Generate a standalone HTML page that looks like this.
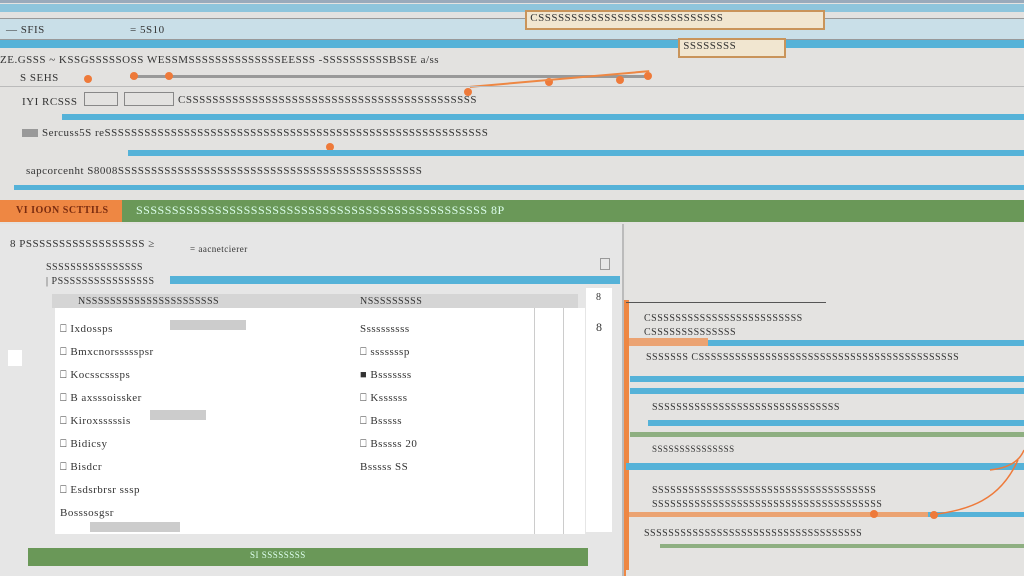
<!DOCTYPE html><html><head><style>
body{margin:0;width:1024px;height:576px;background:#e3e2e0;position:relative;overflow:hidden;font-family:"Liberation Serif",serif;color:#333}
div{position:absolute;box-sizing:border-box}
.t{font-size:11px;white-space:nowrap;letter-spacing:0.5px}
.b{background:#55b2d8}
.g{background:#6a9858}
.o{background:#ee8743}
.dot{width:8px;height:8px;border-radius:50%;background:#ee7a3a}
</style></head><body>
<div style="left:0;top:0;width:1024px;height:3px;background:#9ab"></div>
<div class="b" style="left:0;top:4px;width:1024px;height:8px;opacity:.6"></div>
<div style="left:0;top:18px;width:1024px;height:22px;background:#c9dfe8;border-top:1px solid #999;border-bottom:1px solid #999"></div>
<div class="t" style="left:6px;top:24px">— SFIS</div>
<div class="t" style="left:130px;top:24px">=  5S10</div>
<div class="b" style="left:0;top:40px;width:1024px;height:8px"></div>
<div class="t" style="left:0;top:54px">ZE.GSSS ~ KSSGSSSSSOSS WESSMSSSSSSSSSSSSSSEESSS -SSSSSSSSSSBSSE a/ss</div>
<div class="t" style="left:20px;top:72px">S  SEHS</div>
<div class="dot" style="left:84px;top:75px"></div>
<div style="left:130px;top:75px;width:520px;height:3px;background:#999"></div>
<div class="dot" style="left:130px;top:72px"></div><div class="dot" style="left:165px;top:72px"></div>
<div class="dot" style="left:545px;top:78px"></div><div class="dot" style="left:616px;top:76px"></div><div class="dot" style="left:644px;top:72px"></div>
<div style="left:470px;top:78px;width:180px;height:12px;border-top:2px solid #ee8743;transform:rotate(-5deg)"></div>
<div style="left:525px;top:10px;width:300px;height:20px;background:#f1e6d0;border:2px solid #c9945a" class="t">&nbsp;CSSSSSSSSSSSSSSSSSSSSSSSSSSSS</div>
<div style="left:678px;top:38px;width:108px;height:20px;background:#f1e6d0;border:2px solid #c9945a" class="t">&nbsp;SSSSSSSS</div>
<div style="left:0;top:72px;width:1024px;height:1px;background:#bbb;top:86px"></div>
<div class="t" style="left:22px;top:96px">IYI  RCSSS</div>
<div style="left:84px;top:92px;width:34px;height:14px;border:1px solid #888"></div>
<div style="left:124px;top:92px;width:50px;height:14px;border:1px solid #888"></div>
<div class="t" style="left:178px;top:94px">CSSSSSSSSSSSSSSSSSSSSSSSSSSSSSSSSSSSSSSSSSSSS</div>
<div class="dot" style="left:464px;top:88px"></div>
<div class="b" style="left:62px;top:114px;width:962px;height:6px"></div>
<div style="left:22px;top:129px;width:16px;height:8px;background:#999"></div>
<div class="t" style="left:42px;top:127px">Sercuss5S  reSSSSSSSSSSSSSSSSSSSSSSSSSSSSSSSSSSSSSSSSSSSSSSSSSSSSSSSSSS</div>
<div class="dot" style="left:326px;top:143px"></div>
<div class="b" style="left:128px;top:150px;width:896px;height:6px"></div>
<div class="t" style="left:26px;top:165px">sapcorcenht  S8008SSSSSSSSSSSSSSSSSSSSSSSSSSSSSSSSSSSSSSSSSSSSSS</div>
<div class="b" style="left:14px;top:185px;width:1010px;height:5px"></div>
<div class="o" style="left:0;top:200px;width:122px;height:22px"></div>
<div class="t" style="left:16px;top:205px;color:#7a2c10;font-weight:bold;font-size:10px">VI IOON SCTTILS</div>
<div class="g" style="left:122px;top:200px;width:902px;height:22px"></div>
<div class="t" style="left:136px;top:203px;color:#dfe;font-size:12px">SSSSSSSSSSSSSSSSSSSSSSSSSSSSSSSSSSSSSSSSSSSSSSSSS 8P</div>
<div style="left:0;top:224px;width:624px;height:352px;background:#e6e6e6;border-right:2px solid #bbb"></div>
<div class="t" style="left:10px;top:238px">8  PSSSSSSSSSSSSSSSSSS  ≥</div>
<div class="t" style="left:190px;top:244px;font-size:9px">= aacnetcierer</div>
<div style="left:600px;top:258px;width:10px;height:12px;border:1px solid #999"></div>
<div class="t" style="left:46px;top:262px;font-size:10px">SSSSSSSSSSSSSSSS</div>
<div class="b" style="left:170px;top:276px;width:450px;height:8px"></div>
<div class="t" style="left:46px;top:276px;font-size:10px">| PSSSSSSSSSSSSSSSS</div>
<div style="left:52px;top:294px;width:526px;height:14px;background:#d5d5d5"></div>
<div class="t" style="left:78px;top:296px;font-size:10px">NSSSSSSSSSSSSSSSSSSSSSS</div>
<div class="t" style="left:360px;top:296px;font-size:10px">NSSSSSSSSS</div>
<div style="left:586px;top:288px;width:26px;height:244px;background:#fff"></div>
<div class="t" style="left:596px;top:292px;font-size:10px">8</div>
<div class="t" style="left:596px;top:320px;font-size:12px">8</div>
<div style="left:55px;top:308px;width:530px;height:226px;background:#fff"></div>
<div style="left:534px;top:308px;width:30px;height:226px;border-left:1px solid #ccc;border-right:1px solid #ccc"></div>
<div style="left:8px;top:350px;width:14px;height:16px;background:#fff"></div>
<div style="left:170px;top:320px;width:76px;height:10px;background:#ccc"></div>
<div style="left:150px;top:410px;width:56px;height:10px;background:#ccc"></div>
<div style="left:90px;top:522px;width:90px;height:10px;background:#ccc"></div>
<div class="t" style="left:60px;top:318px;line-height:23px">⎕ Ixdossps<br>⎕ Bmxcnorssssspsr<br>⎕ Kocsscsssps<br>⎕ B axsssoissker<br>⎕ Kiroxsssssis<br>⎕ Bidicsy<br>⎕ Bisdcr<br>⎕ Esdsrbrsr sssp<br>  Bosssosgsr</div>
<div class="t" style="left:360px;top:318px;line-height:23px">Ssssssssss<br>⎕ sssssssp<br>■ Bsssssss<br>⎕ Kssssss<br>⎕ Bsssss<br>⎕ Bsssss 20<br>  Bsssss SS</div>
<div class="g" style="left:28px;top:548px;width:560px;height:18px"></div>
<div class="t" style="left:250px;top:550px;font-size:9px;color:#dfe">SI SSSSSSSS</div>
<div style="left:624px;top:300px;width:3px;height:276px;background:#ee8743"></div>
<div style="left:626px;top:224px;width:398px;height:352px;background:#e4e3e1"></div>
<div style="left:626px;top:300px;width:3px;height:270px;background:#ee8743"></div>
<div style="left:626px;top:302px;width:200px;height:1px;background:#555"></div>
<div class="t" style="left:644px;top:312px;font-size:10px;line-height:14px">CSSSSSSSSSSSSSSSSSSSSSSSSS<br>CSSSSSSSSSSSSSS</div>
<div class="o" style="left:628px;top:338px;width:80px;height:8px;opacity:.7"></div>
<div class="b" style="left:708px;top:340px;width:316px;height:6px"></div>
<div class="t" style="left:646px;top:352px;font-size:10px">SSSSSSS CSSSSSSSSSSSSSSSSSSSSSSSSSSSSSSSSSSSSSSSSSSS</div>
<div class="b" style="left:630px;top:376px;width:394px;height:6px"></div>
<div class="b" style="left:630px;top:388px;width:394px;height:6px"></div>
<div class="t" style="left:652px;top:402px;font-size:10px">SSSSSSSSSSSSSSSSSSSSSSSSSSSSSSS</div>
<div class="b" style="left:648px;top:420px;width:376px;height:6px"></div>
<div class="g" style="left:630px;top:432px;width:394px;height:5px;opacity:.7"></div>
<div class="t" style="left:652px;top:444px;font-size:9px">SSSSSSSSSSSSSSS</div>
<div class="b" style="left:626px;top:463px;width:398px;height:7px"></div>
<div class="t" style="left:652px;top:484px;font-size:10px;line-height:14px">SSSSSSSSSSSSSSSSSSSSSSSSSSSSSSSSSSSSS<br>SSSSSSSSSSSSSSSSSSSSSSSSSSSSSSSSSSSSSS</div>
<div class="o" style="left:628px;top:512px;width:300px;height:5px;opacity:.7"></div>
<div class="b" style="left:928px;top:512px;width:96px;height:5px"></div>
<div class="dot" style="left:870px;top:510px"></div><div class="dot" style="left:930px;top:511px"></div>
<div class="t" style="left:644px;top:528px;font-size:10px">SSSSSSSSSSSSSSSSSSSSSSSSSSSSSSSSSSSS</div>
<div class="g" style="left:660px;top:544px;width:364px;height:4px;opacity:.7"></div>
<svg style="position:absolute;left:930px;top:440px" width="94" height="80"><path d="M0 75 C40 70 70 60 88 20 M60 30 C80 28 90 20 94 10" stroke="#ee7a3a" fill="none" stroke-width="1.5"/></svg>
</body></html>
